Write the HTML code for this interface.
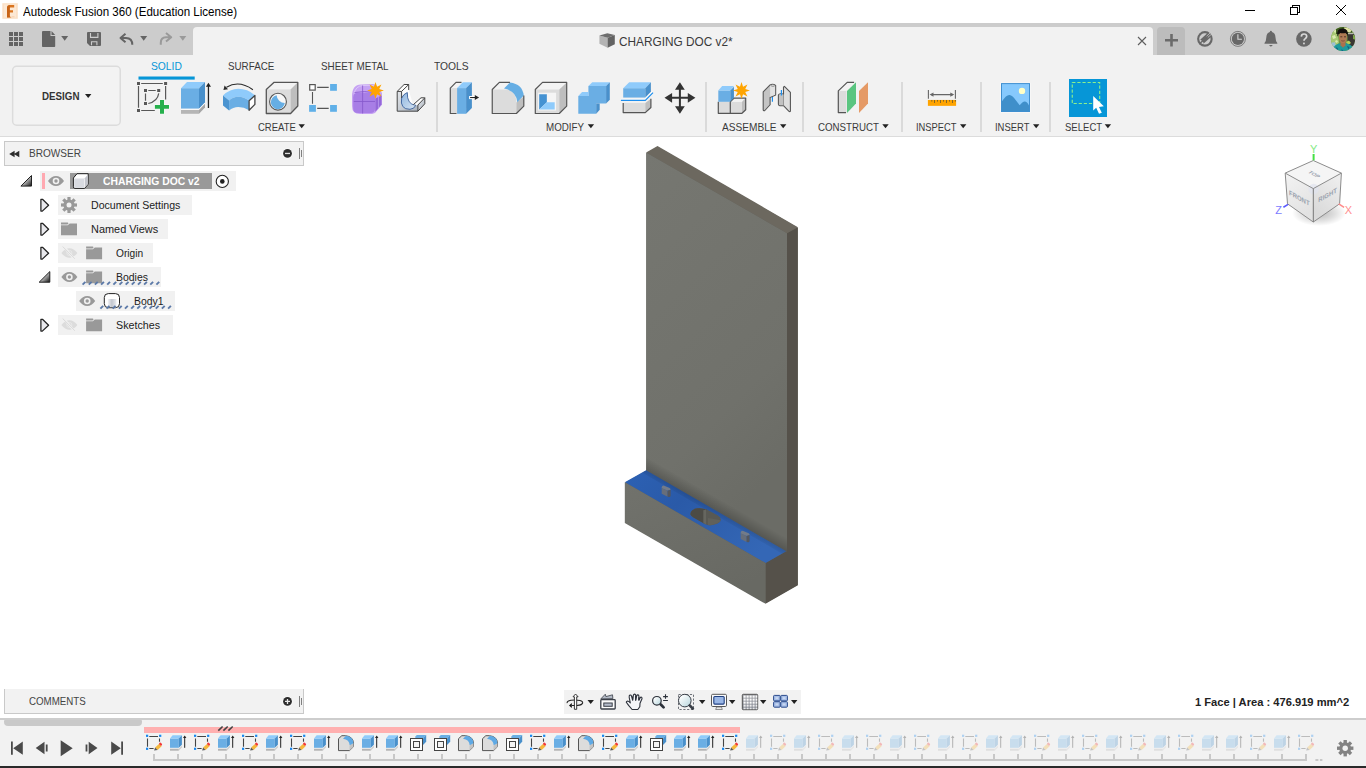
<!DOCTYPE html>
<html lang="en">
<head>
<meta charset="utf-8">
<title>Autodesk Fusion 360 (Education License)</title>
<style>
html,body{margin:0;padding:0;}
body{width:1366px;height:768px;overflow:hidden;position:relative;background:#fff;font-family:"Liberation Sans",sans-serif;color:#333;}
.abs{position:absolute;}
.t{position:absolute;white-space:nowrap;line-height:1;transform-origin:0 0;}
#titlebar{left:0;top:0;width:1366px;height:23px;background:#fff;}
#tabbar{left:0;top:23px;width:1366px;height:32px;background:#cccccc;}
#doctab{left:193px;top:27px;width:960px;height:28px;background:#f2f2f2;border-radius:4px 4px 0 0;}
#newtab{left:1157px;top:27px;width:28px;height:28px;background:#bcbcbc;border-radius:4px 4px 0 0;}
#toolbar{left:0;top:55px;width:1366px;height:81px;background:#f2f2f2;border-bottom:1px solid #dcdcdc;}
#timeline{left:0;top:718px;width:1366px;height:48px;background:#f2f2f2;border-top:2px solid #cdcdcd;box-sizing:border-box;}
#bottombar{left:0;top:766px;width:1366px;height:2px;background:#2a2a2a;}
.panel{background:#f2f2f2;border:1px solid #c9c9c9;box-sizing:border-box;}
.rowbg{position:absolute;background:#f1f1f1;height:20px;}
.sep{position:absolute;top:82px;height:50px;width:2px;background:#dadada;}
#gfx{position:absolute;left:0;top:0;width:1366px;height:768px;}
</style>
</head>
<body>
<div id="titlebar" class="abs"></div>
<div id="tabbar" class="abs"></div>
<div id="doctab" class="abs"></div>
<div id="newtab" class="abs"></div>
<div id="toolbar" class="abs"></div>
<div id="timeline" class="abs"></div>
<div id="bottombar" class="abs"></div>
<div class="abs panel" style="left:4px;top:141px;width:300px;height:25px;"></div>
<div class="abs panel" style="left:4px;top:689px;width:300px;height:25px;border-top:none;"></div>
<div class="abs" style="left:564px;top:690px;width:237px;height:24px;background:#f2f2f2;"></div>
<div class="sep" style="left:436px;"></div>
<div class="sep" style="left:705px;"></div>
<div class="sep" style="left:802px;"></div>
<div class="sep" style="left:901px;"></div>
<div class="sep" style="left:980px;"></div>
<div class="sep" style="left:1049px;"></div>
<div class="abs" style="left:1069px;top:79px;width:38px;height:38px;background:#0696d7;"></div>
<div class="rowbg" style="left:40px;top:171px;width:196px;"></div>
<div class="rowbg" style="left:58px;top:195px;width:134px;"></div>
<div class="rowbg" style="left:58px;top:219px;width:110px;"></div>
<div class="rowbg" style="left:58px;top:243px;width:95px;"></div>
<div class="rowbg" style="left:58px;top:267px;width:103px;"></div>
<div class="rowbg" style="left:76px;top:291px;width:99px;"></div>
<div class="rowbg" style="left:58px;top:315px;width:115px;"></div>
<div class="abs" style="left:70px;top:173px;width:142px;height:16px;background:#999999;"></div>
<div class="abs" style="left:42px;top:173px;width:3px;height:16px;background:#ffa9b1;"></div>
<div class="abs" style="left:4px;top:720px;width:138px;height:6px;background:#c9c9c9;border-radius:1px 1px 4px 4px;"></div>
<div class="abs" style="left:144px;top:727px;width:596px;height:6px;background:#ffb0b0;"></div>
<svg xmlns="http://www.w3.org/2000/svg" id="gfx" viewBox="0 0 1366 768">

<defs>
<linearGradient id="triG" x1="0" y1="0" x2="1" y2="1"><stop offset="0.35" stop-color="#e8e8e8" /><stop offset="1" stop-color="#111" /></linearGradient>
</defs>

<g>
<rect x="2.3" y="3.2" width="15.5" height="15.6" fill="#fbe0c6" />
<rect x="4" y="4.5" width="12" height="13" fill="#fce8d4" />
<path d="M7 7.5Q7 5 9.8 5H14.2V7.4H10.3Q9.8 7.4 9.8 8V10.3H13V12.5H9.8V15.5Q9.8 17 11.2 17V17.4H7z" fill="#d9741f" />
<path d="M7 7.5Q7 5 9.8 5V17.4H7z" fill="#b9560f" opacity=".55" />
<rect x="11.5" y="16.3" width="3" height="1" fill="#f6cfae" />
</g>

<g stroke="#000" stroke-width="1" fill="none" shape-rendering="crispEdges">
<path d="M1245 10.5h10" />
<path d="M1290.5 7.5h7v7h-7z" />
<path d="M1292.5 7.5v-2h7v7h-2" />
</g>
<path d="M1336 5l10 10M1346 5l-10 10" stroke="#000" stroke-width="1" fill="none" />

<g fill="#646464">
<rect x="9" y="32" width="4" height="4" /><rect x="14" y="32" width="4" height="4" /><rect x="19" y="32" width="4" height="4" />
<rect x="9" y="37" width="4" height="4" /><rect x="14" y="37" width="4" height="4" /><rect x="19" y="37" width="4" height="4" />
<rect x="9" y="42" width="4" height="4" /><rect x="14" y="42" width="4" height="4" /><rect x="19" y="42" width="4" height="4" />
<path d="M43 31h7.5v5h4.7v10.2q0 .8-.8.8H42.8q-.8 0-.8-.8V32q0-1 1-1z" />
<path d="M51.5 31l3.7 4h-3.7z" />
<g transform="translate(61.2 36)"><path d="M0 0h7l-3.5 4.8z" /></g>
<path d="M88 32h12q1 0 1 1v12q0 1-1 1H90l-3-3V33q0-1 1-1z" />
<g transform="translate(140.2 36)"><path d="M0 0h7l-3.5 4.8z" /></g>
</g>
<path d="M90.5 33v4.4h7.4V33M91.5 45.2v-3.4h5.4v3.4" stroke="#cccccc" stroke-width="1.1" fill="none" />
<path d="M125.5 33.7l-5 4.2 5 4.3M121.5 37.9h4.5q6.3 .3 6.3 6.8" stroke="#646464" stroke-width="2" fill="none" stroke-linejoin="round" />
<path d="M166 33l5.2 4.3-5.2 4.3M170.5 37.3h-4.5q-5.2 0-5.2 5.5v2" stroke="#9a9a9a" stroke-width="2" fill="none" stroke-linejoin="round" />
<g transform="translate(179.3 36)" fill="#9a9a9a"><path d="M0 0h7l-3.5 4.8z" /></g>

<path d="M599.4 35.5L607.6 37.7V47.8L599.4 43.7z" fill="#b4b4b4" />
<path d="M607.6 37.7L614.8 35V44.3L607.6 47.8z" fill="#636363" />
<path d="M599.4 35.5L607.3 33.2L614.8 35L607.6 37.7z" fill="#6e6e6e" />

<path d="M1138 37l8 8M1146 37l-8 8" stroke="#5e5e5e" stroke-width="1.1" fill="none" />

<path d="M1171.5 34v12.6M1165 40.3h13" stroke="#6b6b6b" stroke-width="2.6" fill="none" />

<circle cx="1204.9" cy="38.9" r="7.8" fill="#686868" />
<clipPath id="jsc"><circle cx="1204.9" cy="38.9" r="5.7" /></clipPath>
<g transform="rotate(-42 1204.9 38.9)">
<g clip-path="url(#jsc)" fill="#cccccc">
<rect x="1198" y="32" width="14" height="4.3" />
<rect x="1198" y="41.5" width="14" height="5" />
<rect x="1198" y="36.3" width="3.3" height="1.9" />
<rect x="1198" y="39.6" width="3.3" height="1.9" />
</g>
<path d="M1208 38h5M1208 39.8h5" stroke="#cccccc" stroke-width=".7" fill="none" />
</g>

<circle cx="1237.9" cy="38.9" r="7.5" fill="none" stroke="#686868" stroke-width=".8" />
<circle cx="1237.9" cy="38.9" r="6.1" fill="#686868" />
<path d="M1237.9 34.2v5.1h4" fill="none" stroke="#d6d6d6" stroke-width="1.1" />

<path d="M1270.9 30.8q1 0 1.1 1.3q3.3 1 3.5 5.4q.1 3.7 1.8 5.4v.9h-12.8v-.9q1.7-1.7 1.8-5.4q.2-4.4 3.5-5.4q.1-1.3 1.1-1.3zM1268.9 45h4l-2 1.8z" fill="#686868" />

<circle cx="1303.9" cy="38.9" r="7.8" fill="#686868" />
<path d="M1301.3 36.6q.1-2.6 2.7-2.6t2.7 2.3q0 1.4-1.4 2.3t-1.3 2.2" fill="none" stroke="#d9d9d9" stroke-width="1.7" />
<rect x="1303.1" y="42.6" width="1.7" height="1.7" fill="#d9d9d9" />

<clipPath id="avc"><circle cx="1343" cy="39" r="12.1" /></clipPath>
<g clip-path="url(#avc)">
<rect x="1330" y="26" width="26" height="26" fill="#6f9442" />
<path d="M1330 26h12v6l-4 3 1 8-5 4-4-2z" fill="#a7c873" />
<path d="M1333 30l3-2 2 3-3 2zM1332 36l3-1 1 3-3 1zM1335 41l2-1 1 2-2 1z" fill="#dcebb0" />
<path d="M1336 27h10l6 4v3h-16z" fill="#3d5a20" />
<path d="M1344 27.5l4-.5 4 3-2 2.5-5-1z" fill="#e3e6a6" />
<rect x="1347.5" y="34" width="8" height="12" fill="#3a3632" />
<rect x="1347.5" y="32.8" width="6" height="1.4" fill="#b9bcae" />
<path d="M1330 42q3 1 5 0l1 5-6 2z" fill="#9cc0d6" />
<path d="M1353 35l3 0v5l-3-1z" fill="#7fa848" />
<path d="M1346 42l3-1.5 2 2.5-3 2z" fill="#b4d05a" />
<path d="M1332 52q.5-6.5 6.5-8.3l3.5-1h3l3.5 1.3q5 1.5 5.5 8z" fill="#1d9a9c" />
<path d="M1336 47l2 1.5-1 2.5zM1347 46l2.5 1-1 2.5zM1341 49.5l2 .5-.5 2z" fill="#125f86" />
<path d="M1340.5 41h5v4.3l-2.5 2.5-2.5-2.5z" fill="#a9714c" />
<path d="M1338.9 36.5q0-4.5 4-4.5t4 4.5q0 6.6-4 6.6t-4-6.6z" fill="#b07a55" />
<path d="M1337.4 36.8q-1.4-8.2 5.2-8.2q6.4 0 5.2 8q-.6-3-2.2-3.6q-3 .6-5.4.1q-1.7.8-2.8 3.7z" fill="#15100e" />
<path d="M1340.3 36.8h2M1344 36.8h2" stroke="#4a2f22" stroke-width=".9" />
<path d="M1341.3 40.7q1.7.8 3.4 0" stroke="#6a3f2e" stroke-width=".7" fill="none" />
</g>
<defs>
</defs>
<rect x="12.65" y="66.25" width="107.6" height="58.9" rx="4" fill="#f3f3f3" stroke="#dcdcdc" stroke-width="1.5" />
<rect x="138.5" y="76.5" width="56.2" height="3.1" fill="#0696d7" />

<g fill="#222">
<g transform="translate(85 94)"><path d="M0 0h6.4l-3.2 4z" /></g>
<g transform="translate(298.5 124.2)"><path d="M0 0h6.4l-3.2 4z" /></g>
<g transform="translate(587.7 124.2)"><path d="M0 0h6.4l-3.2 4z" /></g>
<g transform="translate(780 124.2)"><path d="M0 0h6.4l-3.2 4z" /></g>
<g transform="translate(882.3 124.2)"><path d="M0 0h6.4l-3.2 4z" /></g>
<g transform="translate(960 124.2)"><path d="M0 0h6.4l-3.2 4z" /></g>
<g transform="translate(1033 124.2)"><path d="M0 0h6.4l-3.2 4z" /></g>
<g transform="translate(1104.7 124.2)"><path d="M0 0h6.4l-3.2 4z" /></g>
</g>

<g fill="none" stroke="#585858" stroke-width="1.2">
<path d="M141.2 83.5H162.8M138.5 86V107.8M165.6 86V99.6M141.2 110.5H154.8" />
<path d="M148.3 90.5H155.7M145.5 93.4V100.8M158.75 93.4Q157.5 101.5 148.3 103.5" />
</g>
<g fill="#585858">
<rect x="137" y="82" width="3" height="3" /><rect x="164.1" y="82" width="3" height="3" /><rect x="137" y="109" width="3" height="3" />
<rect x="144" y="89" width="3" height="3" /><rect x="157.2" y="89" width="3" height="3" /><rect x="144" y="102" width="3" height="3" />
</g>
<path d="M159.5 99.6h5v5h5v4.7h-5v5h-5v-5h-5v-4.7h5z" fill="#f4fbf5" />
<path d="M160 100.1h4v4.9h5v3.75h-5v5.1h-4v-5.1h-5.1v-3.75h5.1z" fill="#26b04c" />

<path d="M181 88.15H199V108.75H181z" fill="#6aaee4" />
<path d="M181 88.15L187 82H205L199 88.15z" fill="#8fcbfb" />
<path d="M199 88.15L205 82V102.6L199 108.75z" fill="#4990cb" />
<path d="M181 108.75H199L205 102.6V103.8L199 110H181z" fill="#f8f8f8" />
<path d="M181 110H199V113.8H181z" fill="#b6b6b6" />
<path d="M199 110L205 103.8V107.5L199 113.8z" fill="#a6a6a6" />
<path d="M208.45 86V108" stroke="#222" stroke-width="1.3" fill="none" />
<path d="M208.45 82.8L211 86.8H205.9z" fill="#222" />

<path d="M252.9 89.7Q239 79.8 226.5 87.2" fill="none" stroke="#2a2a2a" stroke-width="1.1" />
<path d="M223.4 90L224.6 85.6L228 89.2z" fill="#2a2a2a" />
<path d="M223 95.5Q230 88.8 238.3 88.8Q247.5 88.8 254.9 95.2L249.1 100.75Q244 96.8 238.3 96.8Q233 96.8 229.1 100.4z" fill="#8fcbfb" />
<path d="M229.1 100.4Q233 96.8 238.3 96.8Q244 96.8 249.1 100.75V110.3Q244 106.9 238.3 106.9Q233 106.9 229.1 110.6z" fill="#6aaee4" />
<path d="M223 95.5L229.1 100.4V110.6L223 105.4z" fill="#4b94d0" />
<path d="M249.1 100.75L254.9 95.5V104.4L249.1 110.3z" fill="#fff" stroke="#444" stroke-width="1.3" stroke-linejoin="round" />

<path d="M266.3 89.4L274.1 82.3H297.8L290.6 89.4z" fill="#f3f3f3" />
<path d="M266.3 89.4H290.6V113.5H266.3z" fill="#dcdcdc" />
<path d="M290.6 89.4L297.8 82.3V106L290.6 113.5z" fill="#bebebe" />
<path d="M266.3 89.4L274.1 82.3H297.8V106L290.6 113.5H266.3z" fill="none" stroke="#555" stroke-width="1.3" stroke-linejoin="round" />
<circle cx="278" cy="101.7" r="8.4" fill="#f7f7f7" stroke="#555" stroke-width="1.1" />
<path d="M276.6 95.3A7 7 0 1 0 284.8 103A8.2 8.2 0 0 1 276.6 95.3z" fill="#66aee4" />

<path d="M317.2 87.4H328.7M312.5 92V103.8M317.2 108.4H328.7" stroke="#555" stroke-width="1.1" fill="none" />
<rect x="309.7" y="84.6" width="5.5" height="5.5" fill="#fff" stroke="#555" stroke-width="1.2" />
<rect x="330.1" y="84" width="6.8" height="6.8" fill="#60b0e8" />
<rect x="309.1" y="105" width="6.8" height="6.8" fill="#60b0e8" />
<rect x="330.1" y="105" width="6.8" height="6.8" fill="#60b0e8" />

<path d="M352 96.4Q352 84.5 361 84.5L372 84Q376 84.3 378 87.5L382 93V104.75L375 113L372 114H360Q352 114 352 106z" fill="#c6a2f3" />
<path d="M375.3 98.5L381.5 95.5V104.5L375.3 111.8z" fill="#9468d8" />
<path d="M378.5 97V108" stroke="#b79bee" stroke-width=".8" fill="none" />
<path d="M353.2 97.5Q353.2 92.8 358 92.8H371Q375 92.8 375 97V108.5Q375 113 370.5 113H358Q353.2 113 353.2 108.5z" fill="#a87ee6" />
<path d="M354 93.5Q356 86 362.6 85.5L371 85.2Q375.5 85.5 377 88.5L375 92.5" fill="none" stroke="#dcc8fa" stroke-width="1" />
<path d="M353.8 101.5H375M362.6 85.5V113.5M354.5 92.5Q364 90.5 375 92.6" stroke="#8558cc" stroke-width=".8" fill="none" />
<g transform="translate(375.5 90.45)"><path d="M0 -8.4L1.55 -3.75L5.95 -5.95L3.75 -1.55L8.4 0L3.75 1.55L5.95 5.95L1.55 3.75L0 8.4L-1.55 3.75L-5.95 5.95L-3.75 1.55L-8.4 0L-3.75 -1.55L-5.95 -5.95L-1.55 -3.75z" fill="#ffa400" /></g>

<defs><linearGradient id="flG" x1="0" y1="0" x2="1" y2="1"><stop offset="0" stop-color="#e4e7eb" /><stop offset="1" stop-color="#aab2bc" /></linearGradient>
<linearGradient id="flB" x1="0" y1="0" x2="1" y2="1"><stop offset="0" stop-color="#8fb6e0" /><stop offset="1" stop-color="#d7e4f2" /></linearGradient></defs>
<path d="M397.2 91.4L404.1 84.5H408.7V90L413 104.5L421 97.8H424.8V103.8L417.9 111.2H397.2z" fill="#fdfdfd" />
<path d="M397.2 91.4H401.6V104Q402 108 406 108.3L417.9 105V111.2H397.2z" fill="url(#flG)" />
<path d="M417.9 105L424.8 97.8V103.8L417.9 111.2z" fill="url(#flG)" />
<path d="M401.6 98Q399.8 109.5 410 109.3Q414.2 109 415.8 105.3Q406.8 104.5 407.3 92.5Q403.5 94 401.6 98z" fill="url(#flB)" stroke="#274f8f" stroke-width=".8" />
<path d="M397.2 91.4L404.1 84.5H408.7V90M413.5 104.5L421 97.8H424.8V103.8L417.9 111.2H397.2V91.4H401.6L408.7 84.5M417.9 105V111.2M417.9 105L424.8 97.8M401.6 91.4V98" fill="none" stroke="#444" stroke-width="1" stroke-linejoin="round" />

<path d="M450.3 88.1L456 82.4H462L457 88.1z" fill="#f3f3f3" />
<path d="M450.3 88.1H457.5V113.5H450.3z" fill="#dcdcdc" />
<path d="M461.5 82.4H456L450.3 88.1V113.5H456.5" fill="none" stroke="#555" stroke-width="1.2" stroke-linejoin="round" />
<path d="M457.1 88.1H466.1V113.8H457.1z" fill="#6aaee4" />
<path d="M457.1 88.1L462.9 82.15H471.9L466.1 88.1z" fill="#8fcbfb" />
<path d="M466.1 88.1L471.9 82.15V108L466.1 113.8z" fill="#4990cb" />
<rect x="469.1" y="96" width="5.5" height="3.1" fill="#fff" />
<path d="M470.1 97.55H476" stroke="#222" stroke-width="1.1" fill="none" />
<path d="M479.1 97.55L474.8 95V100.1z" fill="#222" />

<path d="M492.25 89.5L499.35 82.4H509L505 89.5z" fill="#f3f3f3" />
<path d="M492.25 89.5H507Q516 91 516.4 102.4V113.5H492.25z" fill="#dcdcdc" />
<path d="M516.4 102.4L523.8 96.5V106.1L516.4 113.5z" fill="#bebebe" />
<path d="M504 88.6L509.95 82.4Q522.5 84 523.8 95.5L517.3 102.2Q516.5 91 504 88.6z" fill="#66aee4" />
<path d="M509.95 82.4H499.35L492.25 89.5V113.5H516.4L523.8 106.1V95.5" fill="none" stroke="#555" stroke-width="1.2" stroke-linejoin="round" />

<path d="M535.3 89.5L542.5 82.4H566.7L559.3 89.5z" fill="#f3f3f3" />
<path d="M535.3 89.5H559.3V113.5H535.3z" fill="#dcdcdc" />
<path d="M559.3 89.5L566.7 82.4V106.1L559.3 113.5z" fill="#bebebe" />
<path d="M535.3 89.5L542.5 82.4H566.7V106.1L559.3 113.5H535.3z" fill="none" stroke="#555" stroke-width="1.2" stroke-linejoin="round" />
<rect x="538.1" y="92.75" width="18" height="17.75" fill="#f5f5f5" />
<path d="M539.2 94.15H546.85V102.2L539.2 109.4z" fill="#4592d2" />
<path d="M539.2 109.5L546.85 102.2H554.7V109.5z" fill="#8fcbfb" />

<path d="M588.4 86.1H606.1V103.4H596.2V113.8H578.3V96H588.4z" fill="#6aaee4" />
<path d="M588.4 86.1L592.3 82.15H609.8L606.1 86.1z" fill="#8fcbfb" />
<path d="M578.3 96L582.1 92H588.4V96z" fill="#8fcbfb" />
<path d="M606.1 86.1L609.8 82.15V99.7L606.1 103.4z" fill="#4990cb" />
<path d="M596.2 103.4H599.7V109.8L596.2 113.8z" fill="#4990cb" />

<path d="M623.2 88.15H645.3V97.55H623.2z" fill="#6aaee4" />
<path d="M623.2 88.15L629.2 82.15H650.9L645.3 88.15z" fill="#8fcbfb" />
<path d="M645.3 88.15L650.9 82.15V91.8L645.3 97.55z" fill="#4990cb" />
<path d="M623.2 102.9H645.3V112.6H623.2z" fill="#dcdcdc" />
<path d="M645.3 102.9L650.9 98.75V107.5L645.3 112.6z" fill="#bebebe" />
<path d="M623.2 102.9V112.6H645.3L650.9 107.5V98.75" fill="none" stroke="#555" stroke-width="1.2" stroke-linejoin="round" />
<path d="M620.9 99.3H645L652.5 91.7" fill="none" stroke="#fdfdfd" stroke-width="1.2" />
<path d="M620.9 100.4H645.3L653 92.6" fill="none" stroke="#1e8fee" stroke-width="1.2" />

<g fill="#333">
<path d="M678.9 88h2v19.6h-2zM670 96.8h19.8v2h-19.8z" />
<path d="M679.9 82.15L684.8 89.8H675zM679.9 113.8L684.8 106.2H675zM664.5 97.8L672.1 92.9V102.7zM695.4 97.8L687.8 92.9V102.7z" />
</g>

<path d="M718.3 101.8H742V113.3H718.3z" fill="#dcdcdc" />
<path d="M730.3 101.8L734.1 98.1H745.7L742 101.8z" fill="#f3f3f3" />
<path d="M742 101.8L745.7 98.1V109.8L742 113.3z" fill="#bebebe" />
<path d="M718.3 101.8V113.3H742L745.7 109.8V98.1H734.1L730.3 101.8V113.3" fill="none" stroke="#555" stroke-width="1.2" stroke-linejoin="round" />
<path d="M718.3 90.45H730.3V101.8H718.3z" fill="#6aaee4" />
<path d="M718.3 90.45L722.15 86.1H733.95L730.3 90.45z" fill="#8fcbfb" />
<path d="M730.3 90.45L733.95 86.8V97.8L730.3 101.8z" fill="#4990cb" />
<g transform="translate(741.5 90.45)"><path d="M0 -8.4L1.55 -3.75L5.95 -5.95L3.75 -1.55L8.4 0L3.75 1.55L5.95 5.95L1.55 3.75L0 8.4L-1.55 3.75L-5.95 5.95L-3.75 1.55L-8.4 0L-3.75 -1.55L-5.95 -5.95L-1.55 -3.75z" fill="#ffa400" /></g>

<path d="M763.2 91.85L770.1 84.9Q772.8 83.5 775.65 85.4V95.05L770.1 97.4V104.75L764.6 110.75Q763.2 110.8 763.2 109.8z" fill="#c4c4c4" stroke="#555" stroke-width="1.1" stroke-linejoin="round" />
<path d="M770.1 85.4Q772.8 84 775.1 85.6V94.8L770.1 96.8z" fill="#e2e2e2" />
<ellipse cx="772.9" cy="85.6" rx="1.9" ry=".8" fill="#f4f4f4" stroke="#666" stroke-width=".6" />
<path d="M772.4 96.9V101.8" stroke="#1e8fee" stroke-width="1.2" fill="none" />
<path d="M784.4 86.3L790.4 92.3V111.2Q789.8 112 789 111.3L783.5 105.7H779.8Q778.4 105.5 778.4 104.3V95.05Q779 93.6 780.7 93.7L783.5 94.1V87.2z" fill="#dedede" stroke="#555" stroke-width="1.1" stroke-linejoin="round" />
<path d="M779 95.3Q779.5 94.3 780.7 94.3L783 94.6V105.1H779.9Q779 105 779 104.2z" fill="#c2c2c2" />
<path d="M783.5 94.1V105.7" stroke="#777" stroke-width=".7" fill="none" />
<path d="M781.4 90V95.5" stroke="#1e8fee" stroke-width="1.2" fill="none" />

<path d="M838.3 90.9L847.2 82.4H854.1L846 90.9z" fill="#f3f3f3" />
<path d="M838.3 90.9H846.5V112.6H838.3z" fill="#dcdcdc" />
<path d="M854.1 82.4H847.2L838.3 90.9V112.6H846" fill="none" stroke="#555" stroke-width="1.2" stroke-linejoin="round" />
<path d="M847 90.9L856 82.15V103.4L847 112.9z" fill="#5ac580" />
<path d="M859 90.9L868 82.15V103.4L859 112.9z" fill="#e59a66" />

<rect x="927.9" y="99.95" width="28.2" height="5.9" fill="#ffa400" />
<path d="M934.5 100v3M940.5 100v3M946.5 100v3M952.5 100v3M931.8 100v1.6M937.5 100v1.6M943.5 100v1.6M949.5 100v1.6M955.4 100v1.6" stroke="#77602a" stroke-width=".9" fill="none" />
<path d="M928.4 90V98.75M955.4 90V98.75M931 94.6H953" stroke="#666" stroke-width="1.1" fill="none" />
<path d="M929.6 94.6L933.5 92.5V96.7zM954.2 94.6L950.3 92.5V96.7z" fill="#666" />

<rect x="1000.5" y="82.6" width="30" height="29.9" fill="#fbfbfb" />
<rect x="1001.5" y="83.6" width="28" height="27.9" fill="#86c9fd" stroke="#3f8fd0" stroke-width="1" />
<path d="M1002 101.3Q1006.5 94.5 1009.5 94.9Q1012.5 95 1016 100.5L1019.7 105.3Q1022.5 101.5 1024.7 101.4Q1027 101.3 1029 105.5V111H1002z" fill="#3f8fca" />
<circle cx="1022" cy="90.9" r="3.2" fill="#ffffc6" />

<rect x="1072.25" y="82.45" width="27.45" height="21.05" fill="none" stroke="#8cf08c" stroke-width="1.1" stroke-dasharray="3.2 1.9" />
<path d="M1093.2 96.1V110.6L1096.2 107.8L1099 113.8L1101.8 112.7L1099 106.9L1103.8 106.25z" fill="#fff" />
<defs>
<linearGradient id="bodyG" x1="0" y1="0" x2="1" y2="0"><stop offset="0" stop-color="#f2f3f6" /><stop offset=".45" stop-color="#c3c7cf" /><stop offset="1" stop-color="#e9ebef" /></linearGradient>
</defs>

<path d="M9.2 154L14.6 150.8V157.2zM13.9 154L19.3 150.8V157.2z" fill="#2d2d2d" />
<circle cx="287.5" cy="153.4" r="5.2" fill="#fafafa" />
<circle cx="287.5" cy="153.4" r="4.4" fill="#2d2d2d" />
<rect x="285" y="152.8" width="5" height="1.3" fill="#e0e0e0" />
<path d="M299.5 148V159M301.5 150V157" stroke="#808080" stroke-width="1" fill="none" />

<circle cx="287.5" cy="701.4" r="5.2" fill="#fafafa" />
<circle cx="287.5" cy="701.4" r="4.4" fill="#2d2d2d" />
<path d="M285 701.4h5M287.5 698.9v5" stroke="#e8e8e8" stroke-width="1.3" fill="none" />
<path d="M299.5 696V707M301.5 698V705" stroke="#808080" stroke-width="1" fill="none" />

<g transform="translate(20.3 174.7)"><path d="M.6 11.4L11.2 .8V11.4z" fill="url(#triG)" stroke="#222" stroke-width="1" stroke-linejoin="round" /></g>
<g transform="translate(48 176)"><g><path d="M0 5Q3.5 0 8 0T16 5Q12.5 10 8 10T0 5z" fill="#999999" /><circle cx="8" cy="5" r="3.3" fill="#f1f1f1" /><circle cx="8" cy="5" r="1.7" fill="#999999" /></g></g>
<path d="M73.4 178L77 173.7H88.2V184.2L84.6 188.4H75Q73.4 188.4 73.4 186.8z" fill="#fff" stroke="#222" stroke-width="1" stroke-linejoin="round" />
<path d="M74.2 178.5H84.2V187.8H75Q74.2 187.8 74.2 187z" fill="#d9dbe1" />
<path d="M84.8 178.2L87.7 174.8V184L84.8 187.4z" fill="#c3c5cc" />
<circle cx="222.3" cy="181.4" r="6.1" fill="#fff" stroke="#222" stroke-width="1.1" />
<circle cx="222.3" cy="181.4" r="2.3" fill="#222" />

<g transform="translate(40 198.6)"><path d="M.9 .7H2.5L8.6 6.6L2.3 12.5H.9z" fill="#e9e9ed" stroke="#222" stroke-width="1.25" stroke-linejoin="round" /></g>
<g transform="translate(69 205)" fill="#999999">
<circle r="5.6" />
<g id="teeth"><rect x="-1.6" y="-8" width="3.2" height="16" /><rect x="-8" y="-1.6" width="16" height="3.2" /></g>
<g transform="rotate(45)"><g><rect x="-1.6" y="-8" width="3.2" height="16" /><rect x="-8" y="-1.6" width="16" height="3.2" /></g></g>
<circle r="2.5" fill="#f1f1f1" />
</g>

<g transform="translate(40 222.6)"><path d="M.9 .7H2.5L8.6 6.6L2.3 12.5H.9z" fill="#e9e9ed" stroke="#222" stroke-width="1.25" stroke-linejoin="round" /></g>
<g transform="translate(61 222.6)"><g fill="#999999"><path d="M0 0H6.6Q7.2 0 7.3 .6V1.1L6.4 1.85H0z" /><path d="M0 2.6H6.7L8.7 .9H16V12.6H0z" /></g></g>

<g transform="translate(40 246.6)"><path d="M.9 .7H2.5L8.6 6.6L2.3 12.5H.9z" fill="#e9e9ed" stroke="#222" stroke-width="1.25" stroke-linejoin="round" /></g>
<g transform="translate(61.4 248)"><g><path d="M0 5Q3.5 .3 8 .3T16 5Q12.5 9.7 8 9.7T0 5z" fill="#dcdcdc" /><circle cx="8" cy="5" r="2.6" fill="none" stroke="#e8e8e8" stroke-width="1" /><path d="M2.3 -1.5L12.6 10.6" stroke="#f1f1f1" stroke-width="2.2" /><path d="M1.3 -1.4L13.4 10.7" stroke="#dadada" stroke-width="1" /></g></g>
<g transform="translate(86.1 246.6)"><g fill="#999999"><path d="M0 0H6.6Q7.2 0 7.3 .6V1.1L6.4 1.85H0z" /><path d="M0 2.6H6.7L8.7 .9H16V12.6H0z" /></g></g>

<g transform="translate(38.6 270.8)"><path d="M.6 11.4L11.2 .8V11.4z" fill="url(#triG)" stroke="#222" stroke-width="1" stroke-linejoin="round" /></g>
<g transform="translate(61.4 272)"><g><path d="M0 5Q3.5 0 8 0T16 5Q12.5 10 8 10T0 5z" fill="#999999" /><circle cx="8" cy="5" r="3.3" fill="#f1f1f1" /><circle cx="8" cy="5" r="1.7" fill="#999999" /></g></g>
<g transform="translate(86.1 270.6)"><g fill="#999999"><path d="M0 0H6.6Q7.2 0 7.3 .6V1.1L6.4 1.85H0z" /><path d="M0 2.6H6.7L8.7 .9H16V12.6H0z" /></g></g>

<g transform="translate(79.2 296)"><g><path d="M0 5Q3.5 0 8 0T16 5Q12.5 10 8 10T0 5z" fill="#999999" /><circle cx="8" cy="5" r="3.3" fill="#f1f1f1" /><circle cx="8" cy="5" r="1.7" fill="#999999" /></g></g>
<path d="M104.3 297.5Q104.3 293.6 108.3 293.6H115.5Q119.5 293.6 119.5 297.5V303.7Q119.5 307.7 115.5 307.7H108.3Q104.3 307.7 104.3 303.7z" fill="#fff" stroke="#222" stroke-width="1" />
<path d="M107.9 299H116.4V307.2H107.9z" fill="url(#bodyG)" />

<g transform="translate(40 318.6)"><path d="M.9 .7H2.5L8.6 6.6L2.3 12.5H.9z" fill="#e9e9ed" stroke="#222" stroke-width="1.25" stroke-linejoin="round" /></g>
<g transform="translate(61.4 320)"><g><path d="M0 5Q3.5 .3 8 .3T16 5Q12.5 9.7 8 9.7T0 5z" fill="#dcdcdc" /><circle cx="8" cy="5" r="2.6" fill="none" stroke="#e8e8e8" stroke-width="1" /><path d="M2.3 -1.5L12.6 10.6" stroke="#f1f1f1" stroke-width="2.2" /><path d="M1.3 -1.4L13.4 10.7" stroke="#dadada" stroke-width="1" /></g></g>
<g transform="translate(86.1 318.6)"><g fill="#999999"><path d="M0 0H6.6Q7.2 0 7.3 .6V1.1L6.4 1.85H0z" /><path d="M0 2.6H6.7L8.7 .9H16V12.6H0z" /></g></g>

<g>
<g transform="translate(82.6 281.7)"><path d="M0 3L2.8 .2" stroke="#5b79a8" stroke-width="1.9" fill="none" /></g>
<g transform="translate(88.8 281.7)"><path d="M0 3L2.8 .2" stroke="#5b79a8" stroke-width="1.9" fill="none" /></g>
<g transform="translate(94.9 281.7)"><path d="M0 3L2.8 .2" stroke="#5b79a8" stroke-width="1.9" fill="none" /></g>
<g transform="translate(101.1 281.7)"><path d="M0 3L2.8 .2" stroke="#5b79a8" stroke-width="1.9" fill="none" /></g>
<g transform="translate(107.2 281.7)"><path d="M0 3L2.8 .2" stroke="#5b79a8" stroke-width="1.9" fill="none" /></g>
<g transform="translate(113.4 281.7)"><path d="M0 3L2.8 .2" stroke="#5b79a8" stroke-width="1.9" fill="none" /></g>
<g transform="translate(119.5 281.7)"><path d="M0 3L2.8 .2" stroke="#5b79a8" stroke-width="1.9" fill="none" /></g>
<g transform="translate(125.7 281.7)"><path d="M0 3L2.8 .2" stroke="#5b79a8" stroke-width="1.9" fill="none" /></g>
<g transform="translate(131.8 281.7)"><path d="M0 3L2.8 .2" stroke="#5b79a8" stroke-width="1.9" fill="none" /></g>
<g transform="translate(138 281.7)"><path d="M0 3L2.8 .2" stroke="#5b79a8" stroke-width="1.9" fill="none" /></g>
<g transform="translate(144.1 281.7)"><path d="M0 3L2.8 .2" stroke="#5b79a8" stroke-width="1.9" fill="none" /></g>
<g transform="translate(150.3 281.7)"><path d="M0 3L2.8 .2" stroke="#5b79a8" stroke-width="1.9" fill="none" /></g>
<g transform="translate(156.4 281.7)"><path d="M0 3L2.8 .2" stroke="#5b79a8" stroke-width="1.9" fill="none" /></g>
<g transform="translate(100.4 305.7)"><path d="M0 3L2.8 .2" stroke="#5b79a8" stroke-width="1.9" fill="none" /></g>
<g transform="translate(106.6 305.7)"><path d="M0 3L2.8 .2" stroke="#5b79a8" stroke-width="1.9" fill="none" /></g>
<g transform="translate(112.7 305.7)"><path d="M0 3L2.8 .2" stroke="#5b79a8" stroke-width="1.9" fill="none" /></g>
<g transform="translate(118.9 305.7)"><path d="M0 3L2.8 .2" stroke="#5b79a8" stroke-width="1.9" fill="none" /></g>
<g transform="translate(125 305.7)"><path d="M0 3L2.8 .2" stroke="#5b79a8" stroke-width="1.9" fill="none" /></g>
<g transform="translate(131.2 305.7)"><path d="M0 3L2.8 .2" stroke="#5b79a8" stroke-width="1.9" fill="none" /></g>
<g transform="translate(137.3 305.7)"><path d="M0 3L2.8 .2" stroke="#5b79a8" stroke-width="1.9" fill="none" /></g>
<g transform="translate(143.5 305.7)"><path d="M0 3L2.8 .2" stroke="#5b79a8" stroke-width="1.9" fill="none" /></g>
<g transform="translate(149.6 305.7)"><path d="M0 3L2.8 .2" stroke="#5b79a8" stroke-width="1.9" fill="none" /></g>
<g transform="translate(155.8 305.7)"><path d="M0 3L2.8 .2" stroke="#5b79a8" stroke-width="1.9" fill="none" /></g>
<g transform="translate(161.9 305.7)"><path d="M0 3L2.8 .2" stroke="#5b79a8" stroke-width="1.9" fill="none" /></g>
<g transform="translate(168.1 305.7)"><path d="M0 3L2.8 .2" stroke="#5b79a8" stroke-width="1.9" fill="none" /></g>
</g>
<defs>
<linearGradient id="wallG" x1="0" y1="0" x2="0.35" y2="1"><stop offset="0" stop-color="#767771" /><stop offset=".75" stop-color="#70716b" /><stop offset="1" stop-color="#6b6c66" /></linearGradient>
<linearGradient id="baseG" x1="0" y1="0" x2="0.6" y2="1"><stop offset="0" stop-color="#71726c" /><stop offset="1" stop-color="#686963" /></linearGradient>
<linearGradient id="blueG" x1="0" y1="0" x2="1" y2="0.6"><stop offset="0" stop-color="#2c61b4" /><stop offset=".4" stop-color="#2a5aa8" /><stop offset="1" stop-color="#3467b6" /></linearGradient>
<linearGradient id="aoG" gradientUnits="userSpaceOnUse" x1="716" y1="510.7" x2="722" y2="500.3"><stop offset="0" stop-color="#000" stop-opacity=".2" /><stop offset="1" stop-color="#000" stop-opacity="0" /></linearGradient>
<linearGradient id="aoB" gradientUnits="userSpaceOnUse" x1="716" y1="510.7" x2="712.5" y2="516.8"><stop offset="0" stop-color="#000" stop-opacity=".13" /><stop offset="1" stop-color="#000" stop-opacity="0" /></linearGradient>
</defs>

<path d="M646.6 153L657.5 146.7L797.4 227.5V585L765.5 603.2L625.3 522.6V482.6L646.6 470.5z" fill="#5e5c55" />

<path d="M787 233.3L797.9 227.2V585.3L765.5 603.8V563.1L786.25 551.25z" fill="#55514a" />

<path d="M646.1 152.5L657.5 146.1L797.9 227.2L787 233.3z" fill="#6c685f" />

<path d="M646.1 152.5L787 233.3V552L646.1 471z" fill="url(#wallG)" />
<path d="M646.1 471L787 552V538L646.1 457z" fill="url(#aoG)" />

<path d="M624.8 482.3L646.1 470.2L786.25 551.25L765.6 563.1z" fill="url(#blueG)" />
<path d="M646.1 470.2L786.25 551.25L782 553.7L642 472.6z" fill="url(#aoB)" />

<path d="M624.8 482.3L765.6 563.1V603.8L624.8 522.9z" fill="url(#baseG)" />

<path d="M661.7 487.2Q661.8 485.8 663.6 485.5L669.6 488.1Q670.7 488.7 670.6 489.8L667.6 490.8L661.7 488.2z" fill="#737b88" />
<path d="M661.7 488L667.6 490.7V496.7L661.7 493.7z" fill="#676e7a" />
<path d="M667.6 490.7L670.6 489.7V495.7Q670.4 497.1 669.2 497.1L667.6 496.7z" fill="#54575d" />
<path d="M740.7 532.4Q740.8 531 742.6 530.7L748.6 533.3Q749.7 533.9 749.6 535L746.6 536L740.7 533.4z" fill="#737b88" />
<path d="M740.7 533.2L746.6 535.9V541.9L740.7 538.9z" fill="#676e7a" />
<path d="M746.6 535.9L749.6 534.9V540.9Q749.4 542.3 748.2 542.3L746.6 541.9z" fill="#54575d" />

<path d="M690.4 514.3Q690.6 509 697.9 508.25Q702.5 507.8 707.2 509.8L717.5 515.3Q721 517.3 720.8 519.7Q720.3 522.5 715.8 523.9L712 525Q708.65 525.7 705.5 524.2L693.5 517.5Q690.6 515.9 690.4 514.3z" fill="#595953" />
<path d="M690.4 514.3Q690.6 509 697.9 508.25Q702.5 507.8 707.2 509.8L704.5 510.5V523.7L693.5 517.5Q690.6 515.9 690.4 514.3z" fill="#4c4b45" />
<path d="M703.3 510.3L706 509.6V524.4L703.3 523z" fill="#66665f" />
<path d="M708 518Q714 519 720.7 520.2Q720 522.6 715.8 523.9L712 525Q709.5 525.5 708 525z" fill="#61615a" />
<defs>
<radialGradient id="shG" cx=".5" cy=".5" r=".5"><stop offset="0" stop-color="#000" stop-opacity=".28" /><stop offset=".6" stop-color="#000" stop-opacity=".12" /><stop offset="1" stop-color="#000" stop-opacity="0" /></radialGradient>
<linearGradient id="vcL" x1="0" y1="0" x2=".4" y2="1"><stop offset="0" stop-color="#f3f3f3" /><stop offset="1" stop-color="#e2e2e2" /></linearGradient>
<linearGradient id="vcR" x1="1" y1="0" x2=".5" y2="1"><stop offset="0" stop-color="#f0f0f0" /><stop offset="1" stop-color="#dadada" /></linearGradient>
</defs>
<ellipse cx="1319" cy="213" rx="27" ry="13" fill="url(#shG)" />
<path d="M1313.3 160.5L1341.4 173.1L1313.3 188.6L1285.2 173.1z" fill="#f5f5f5" />
<path d="M1285.2 173.1L1313.3 188.6V222L1287.5 203.8z" fill="url(#vcL)" />
<path d="M1313.3 188.6L1341.4 173.1L1339.6 203.8L1313.3 222z" fill="url(#vcR)" />
<circle cx="1313.6" cy="189" r="5.2" fill="#dfe3ee" opacity=".7" />
<g fill="none" stroke="#8c8c8c" stroke-width="1" stroke-linejoin="round">
<path d="M1313.3 160.5L1341.4 173.1L1313.3 188.6L1285.2 173.1z" />
<path d="M1285.2 173.1L1287.5 203.8L1313.3 222L1339.6 203.8L1341.4 173.1" />
<path d="M1313.3 188.6V222" stroke="#777" />
</g>
<path d="M1313.6 154V160.3" stroke="#44e044" stroke-width="2" fill="none" />
<path d="M1283.4 207.3L1288.1 204.4" stroke="#5a5aff" stroke-width="1.6" fill="none" />
<path d="M1338.7 203.8L1344.1 207.3" stroke="#ff8a8a" stroke-width="1.6" fill="none" />
<g font-family="Liberation Sans, sans-serif" text-anchor="middle">
<text x="1313.6" y="153.3" font-size="11" fill="#86ea86">Y</text>
<text x="1278.5" y="213.7" font-size="11" fill="#7b7bff">Z</text>
<text x="1348.5" y="213.7" font-size="11" fill="#ff8f8f">X</text>
<text transform="matrix(.875 .483 0 1 1299.3 200.4)" font-size="6.8" fill="#99a1ad" font-weight="bold">FRONT</text>
<text transform="matrix(.875 -.483 0 1 1327.6 197.4)" font-size="6.8" fill="#99a1ad" font-weight="bold">RIGHT</text>
<text transform="matrix(.700 .386 -.700 .386 1312.6 175.2)" font-size="7" fill="#99a1ad" font-weight="bold">TOP</text>
</g>
<defs>
<linearGradient id="lensG" x1="0" y1="0" x2="1" y2="1"><stop offset="0.15" stop-color="#ffffff" /><stop offset="1" stop-color="#b5d5dc" /></linearGradient>
<linearGradient id="gridG" x1="0" y1="0" x2="0" y2="1"><stop offset="0" stop-color="#9a9ca2" /><stop offset="1" stop-color="#6f7480" /></linearGradient>
</defs>
<g fill="#222">
<g transform="translate(587.5 700)"><path d="M0 0h6.4l-3.2 4z" /></g>
<g transform="translate(699 700)"><path d="M0 0h6.4l-3.2 4z" /></g>
<g transform="translate(729 700)"><path d="M0 0h6.4l-3.2 4z" /></g>
<g transform="translate(760 700)"><path d="M0 0h6.4l-3.2 4z" /></g>
<g transform="translate(791 700)"><path d="M0 0h6.4l-3.2 4z" /></g>
</g>

<path d="M567.2 703.2Q566.5 701 571 700.3Q575.5 699.7 580 700.5Q583 701.3 582.6 703Q582 705 577.5 705.4L572 705.5" fill="none" stroke="#222" stroke-width="1.1" />
<path d="M569 705.5L571.8 703.1V707.9z" fill="#111" />
<path d="M574.4 709.3V696.8H573L575.55 694L578.1 696.8H576.7V709.3z" fill="#fff" stroke="#222" stroke-width=".9" stroke-linejoin="round" />

<path d="M600.9 698.8L605.3 694.2L605.9 696.6L612.5 694.8L612.9 698.6z" fill="#b3bac6" stroke="#3a3f48" stroke-width=".8" stroke-linejoin="round" />
<rect x="600.8" y="699.6" width="14.4" height="9.4" rx=".8" fill="#fcfcfc" stroke="#3a3f48" stroke-width="1.3" />
<rect x="603.8" y="703" width="8.4" height="3.3" fill="#b4bccb" stroke="#3a3f48" stroke-width="1" />

<path d="M626.3 702.2Q626.5 701 627.7 701Q629 701.3 630.3 702.8L629.2 697.5Q628.9 695.4 629.9 695.1Q631 694.8 631.5 696L632.6 700L633.4 695.2Q633.6 694.1 634.6 694.1Q635.6 694.1 635.7 695.2V700.2L636.7 695.8Q637 694.8 637.9 694.9Q638.9 695 638.9 696.2V700.2L640.2 697.7Q640.8 696.9 641.5 697.3Q642.3 697.8 642 698.8L640 703.2L639.8 706.7L637.8 709.5H632.1L628.6 705.4z" fill="#f4f5f8" stroke="#2c313a" stroke-width="1.1" stroke-linejoin="round" />
<path d="M632.7 696.5V700.5M635.7 696V700.5M638.8 697.2V700.3" stroke="#2c313a" stroke-width="1.1" fill="none" />

<circle cx="656.9" cy="700.8" r="4.3" fill="url(#lensG)" stroke="#2c313a" stroke-width="1.2" />
<path d="M660.8 704.5L663.6 707.4" stroke="#2c313a" stroke-width="2.7" stroke-linecap="round" fill="none" />
<path d="M663.1 696.6H667.9M665.5 694.2V698.8M663.1 700.45H667.9" stroke="#2c313a" stroke-width="1.1" fill="none" />

<path d="M678.5 694.5H693.5V709.5H678.5z" fill="none" stroke="#4a4f58" stroke-width=".8" stroke-dasharray="2.2 1.6" />
<circle cx="684.8" cy="700.6" r="6.3" fill="url(#lensG)" stroke="#3a3f48" stroke-width="1" />
<path d="M689.7 705.4L692.8 708.6" stroke="#3a3f48" stroke-width="2.8" stroke-linecap="round" fill="none" />

<rect x="711.5" y="694.3" width="15" height="12.2" rx="1.2" fill="#fafafa" stroke="#555" stroke-width="1" />
<rect x="713.8" y="696.5" width="10.4" height="7.6" rx="1" fill="#9ab7e6" stroke="#1f3f80" stroke-width="1.1" />
<path d="M716.5 707h5l.8 2.5h-6.6z" fill="#e8e8e8" stroke="#666" stroke-width=".7" />

<rect x="742.3" y="694.3" width="15.4" height="15.4" rx="1" fill="url(#gridG)" stroke="#555" stroke-width="1" />
<g fill="#fafafa">
<path d="M743.5 695.5h2.2v2.2h-2.2zM746.5 695.5h2.2v2.2h-2.2zM749.5 695.5h2.2v2.2h-2.2zM752.5 695.5h2.2v2.2h-2.2zM755.5 695.5h1.8v2.2h-1.8z" opacity="1" />
<path d="M743.5 698.5h2.2v2.2h-2.2zM746.5 698.5h2.2v2.2h-2.2zM749.5 698.5h2.2v2.2h-2.2zM752.5 698.5h2.2v2.2h-2.2zM755.5 698.5h1.8v2.2h-1.8z" opacity="1" />
<path d="M743.5 701.5h2.2v2.2h-2.2zM746.5 701.5h2.2v2.2h-2.2zM749.5 701.5h2.2v2.2h-2.2zM752.5 701.5h2.2v2.2h-2.2zM755.5 701.5h1.8v2.2h-1.8z" opacity="1" />
<path d="M743.5 704.5h2.2v2.2h-2.2zM746.5 704.5h2.2v2.2h-2.2zM749.5 704.5h2.2v2.2h-2.2zM752.5 704.5h2.2v2.2h-2.2zM755.5 704.5h1.8v2.2h-1.8z" opacity="0.9" />
<path d="M743.5 707.5h2.2v1.7h-2.2zM746.5 707.5h2.2v1.7h-2.2zM749.5 707.5h2.2v1.7h-2.2zM752.5 707.5h2.2v1.7h-2.2zM755.5 707.5h1.8v1.7h-1.8z" opacity="0.85" />
</g>

<g fill="#a9c0e8" stroke="#2a4a8c" stroke-width="1">
<rect x="773.6" y="695.4" width="6.6" height="5.5" rx=".8" />
<rect x="780.8" y="695.4" width="6.6" height="5.5" rx=".8" />
<rect x="773.6" y="701.7" width="6.6" height="5.5" rx=".8" />
<rect x="780.8" y="701.7" width="6.6" height="5.5" rx=".8" />
</g>
<g fill="#c9d8f2"><rect x="775.6" y="697.2" width="2.6" height="1.8" /><rect x="782.8" y="697.2" width="2.6" height="1.8" /><rect x="775.6" y="703.5" width="2.6" height="1.8" /><rect x="782.8" y="703.5" width="2.6" height="1.8" /></g>
<defs>
</defs>
<g>
<g transform="translate(146 735.2)"><g>
<path d="M3.3 1.3H12M1.5 3.3V11.6M13.5 3.3V6.5M3.3 13.3H7.6" stroke="#444" stroke-width="1.1" fill="none" />
<rect x="0" y="-.5" width="2.2" height="2.2" fill="#1787f0" /><rect x="13.1" y="-.5" width="2.2" height="2.2" fill="#1787f0" /><rect x="0" y="12.5" width="2.2" height="2.2" fill="#1787f0" />
<path d="M13.3 8.5L15.6 11L11.6 14.7L9.1 12.3z" fill="#f6b83c" />
<path d="M9.1 12.3L11.6 14.7L8.1 15.3z" fill="#5a5a5a" />
<ellipse cx="14.6" cy="8.9" rx="1.7" ry="1.2" transform="rotate(42 14.6 8.9)" fill="#f23a3a" />
</g></g>
<g transform="translate(170 735.2)"><g>
<path d="M0 3.3H8.8V12.6H0z" fill="#6aaee4" />
<path d="M0 3.3L2.6 0H11.9L8.8 3.3z" fill="#8fcbfb" />
<path d="M8.8 3.3L11.9 0V9.5L8.8 12.6z" fill="#4990cb" />
<path d="M0 13.6H8.8V15.5H0z" fill="#b4b4b4" />
<path d="M8.8 13.6L11.9 10.4V12.3L8.8 15.5z" fill="#cfcfcf" />
<path d="M14.7 1.5V12.6" stroke="#222" stroke-width="1" fill="none" />
<path d="M14.7 .2L16.4 2.7H13z" fill="#222" />
</g></g>
<g transform="translate(194 735.2)"><g>
<path d="M3.3 1.3H12M1.5 3.3V11.6M13.5 3.3V6.5M3.3 13.3H7.6" stroke="#444" stroke-width="1.1" fill="none" />
<rect x="0" y="-.5" width="2.2" height="2.2" fill="#1787f0" /><rect x="13.1" y="-.5" width="2.2" height="2.2" fill="#1787f0" /><rect x="0" y="12.5" width="2.2" height="2.2" fill="#1787f0" />
<path d="M13.3 8.5L15.6 11L11.6 14.7L9.1 12.3z" fill="#f6b83c" />
<path d="M9.1 12.3L11.6 14.7L8.1 15.3z" fill="#5a5a5a" />
<ellipse cx="14.6" cy="8.9" rx="1.7" ry="1.2" transform="rotate(42 14.6 8.9)" fill="#f23a3a" />
</g></g>
<g transform="translate(218 735.2)"><g>
<path d="M0 3.3H8.8V12.6H0z" fill="#6aaee4" />
<path d="M0 3.3L2.6 0H11.9L8.8 3.3z" fill="#8fcbfb" />
<path d="M8.8 3.3L11.9 0V9.5L8.8 12.6z" fill="#4990cb" />
<path d="M0 13.6H8.8V15.5H0z" fill="#b4b4b4" />
<path d="M8.8 13.6L11.9 10.4V12.3L8.8 15.5z" fill="#cfcfcf" />
<path d="M14.7 1.5V12.6" stroke="#222" stroke-width="1" fill="none" />
<path d="M14.7 .2L16.4 2.7H13z" fill="#222" />
</g></g>
<g transform="translate(242 735.2)"><g>
<path d="M3.3 1.3H12M1.5 3.3V11.6M13.5 3.3V6.5M3.3 13.3H7.6" stroke="#444" stroke-width="1.1" fill="none" />
<rect x="0" y="-.5" width="2.2" height="2.2" fill="#1787f0" /><rect x="13.1" y="-.5" width="2.2" height="2.2" fill="#1787f0" /><rect x="0" y="12.5" width="2.2" height="2.2" fill="#1787f0" />
<path d="M13.3 8.5L15.6 11L11.6 14.7L9.1 12.3z" fill="#f6b83c" />
<path d="M9.1 12.3L11.6 14.7L8.1 15.3z" fill="#5a5a5a" />
<ellipse cx="14.6" cy="8.9" rx="1.7" ry="1.2" transform="rotate(42 14.6 8.9)" fill="#f23a3a" />
</g></g>
<g transform="translate(266 735.2)"><g>
<path d="M0 3.3H8.8V12.6H0z" fill="#6aaee4" />
<path d="M0 3.3L2.6 0H11.9L8.8 3.3z" fill="#8fcbfb" />
<path d="M8.8 3.3L11.9 0V9.5L8.8 12.6z" fill="#4990cb" />
<path d="M0 13.6H8.8V15.5H0z" fill="#b4b4b4" />
<path d="M8.8 13.6L11.9 10.4V12.3L8.8 15.5z" fill="#cfcfcf" />
<path d="M14.7 1.5V12.6" stroke="#222" stroke-width="1" fill="none" />
<path d="M14.7 .2L16.4 2.7H13z" fill="#222" />
</g></g>
<g transform="translate(290 735.2)"><g>
<path d="M3.3 1.3H12M1.5 3.3V11.6M13.5 3.3V6.5M3.3 13.3H7.6" stroke="#444" stroke-width="1.1" fill="none" />
<rect x="0" y="-.5" width="2.2" height="2.2" fill="#1787f0" /><rect x="13.1" y="-.5" width="2.2" height="2.2" fill="#1787f0" /><rect x="0" y="12.5" width="2.2" height="2.2" fill="#1787f0" />
<path d="M13.3 8.5L15.6 11L11.6 14.7L9.1 12.3z" fill="#f6b83c" />
<path d="M9.1 12.3L11.6 14.7L8.1 15.3z" fill="#5a5a5a" />
<ellipse cx="14.6" cy="8.9" rx="1.7" ry="1.2" transform="rotate(42 14.6 8.9)" fill="#f23a3a" />
</g></g>
<g transform="translate(314 735.2)"><g>
<path d="M0 3.3H8.8V12.6H0z" fill="#6aaee4" />
<path d="M0 3.3L2.6 0H11.9L8.8 3.3z" fill="#8fcbfb" />
<path d="M8.8 3.3L11.9 0V9.5L8.8 12.6z" fill="#4990cb" />
<path d="M0 13.6H8.8V15.5H0z" fill="#b4b4b4" />
<path d="M8.8 13.6L11.9 10.4V12.3L8.8 15.5z" fill="#cfcfcf" />
<path d="M14.7 1.5V12.6" stroke="#222" stroke-width="1" fill="none" />
<path d="M14.7 .2L16.4 2.7H13z" fill="#222" />
</g></g>
<g transform="translate(338 735.2)"><g>
<path d="M.5 15.4V3.5L3.8 .5H7.5Q15.2 1.3 15.5 8V11.5L11.5 15.4z" fill="#dcdcdc" stroke="#555" stroke-width="1" stroke-linejoin="round" />
<path d="M11.5 15.4V11Q11.5 10 12.3 9.5L15.5 8V11.5z" fill="#c4c4c4" />
<path d="M5 3.6L8 .6Q15.2 1.3 15.5 8L11.7 10Q11.4 4.6 5 3.6z" fill="#5fa9e4" />
</g></g>
<g transform="translate(362 735.2)"><g>
<path d="M0 3.3H8.8V12.6H0z" fill="#6aaee4" />
<path d="M0 3.3L2.6 0H11.9L8.8 3.3z" fill="#8fcbfb" />
<path d="M8.8 3.3L11.9 0V9.5L8.8 12.6z" fill="#4990cb" />
<path d="M0 13.6H8.8V15.5H0z" fill="#b4b4b4" />
<path d="M8.8 13.6L11.9 10.4V12.3L8.8 15.5z" fill="#cfcfcf" />
<path d="M14.7 1.5V12.6" stroke="#222" stroke-width="1" fill="none" />
<path d="M14.7 .2L16.4 2.7H13z" fill="#222" />
</g></g>
<g transform="translate(386 735.2)"><g>
<path d="M0 3.3H8.8V12.6H0z" fill="#6aaee4" />
<path d="M0 3.3L2.6 0H11.9L8.8 3.3z" fill="#8fcbfb" />
<path d="M8.8 3.3L11.9 0V9.5L8.8 12.6z" fill="#4990cb" />
<path d="M0 13.6H8.8V15.5H0z" fill="#b4b4b4" />
<path d="M8.8 13.6L11.9 10.4V12.3L8.8 15.5z" fill="#cfcfcf" />
<path d="M14.7 1.5V12.6" stroke="#222" stroke-width="1" fill="none" />
<path d="M14.7 .2L16.4 2.7H13z" fill="#222" />
</g></g>
<g transform="translate(410 735.2)"><g>
<path d="M5.3 1.4L6.8 -.1H16.2L13 3.3H5.3z" fill="#6aaee4" />
<path d="M13 3.3L16.2 -.1V6.5L13 9.8z" fill="#4990cb" />
<rect x=".5" y="3.3" width="12" height="12" fill="#fff" stroke="#444" stroke-width="1" />
<rect x="3.5" y="6.3" width="6" height="6" fill="#f4f4f4" stroke="#444" stroke-width="1" />
</g></g>
<g transform="translate(434 735.2)"><g>
<path d="M5.3 1.4L6.8 -.1H16.2L13 3.3H5.3z" fill="#6aaee4" />
<path d="M13 3.3L16.2 -.1V6.5L13 9.8z" fill="#4990cb" />
<rect x=".5" y="3.3" width="12" height="12" fill="#fff" stroke="#444" stroke-width="1" />
<rect x="3.5" y="6.3" width="6" height="6" fill="#f4f4f4" stroke="#444" stroke-width="1" />
</g></g>
<g transform="translate(458 735.2)"><g>
<path d="M.5 15.4V3.5L3.8 .5H7.5Q15.2 1.3 15.5 8V11.5L11.5 15.4z" fill="#dcdcdc" stroke="#555" stroke-width="1" stroke-linejoin="round" />
<path d="M11.5 15.4V11Q11.5 10 12.3 9.5L15.5 8V11.5z" fill="#c4c4c4" />
<path d="M5 3.6L8 .6Q15.2 1.3 15.5 8L11.7 10Q11.4 4.6 5 3.6z" fill="#5fa9e4" />
</g></g>
<g transform="translate(482 735.2)"><g>
<path d="M.5 15.4V3.5L3.8 .5H7.5Q15.2 1.3 15.5 8V11.5L11.5 15.4z" fill="#dcdcdc" stroke="#555" stroke-width="1" stroke-linejoin="round" />
<path d="M11.5 15.4V11Q11.5 10 12.3 9.5L15.5 8V11.5z" fill="#c4c4c4" />
<path d="M5 3.6L8 .6Q15.2 1.3 15.5 8L11.7 10Q11.4 4.6 5 3.6z" fill="#5fa9e4" />
</g></g>
<g transform="translate(506 735.2)"><g>
<path d="M5.3 1.4L6.8 -.1H16.2L13 3.3H5.3z" fill="#6aaee4" />
<path d="M13 3.3L16.2 -.1V6.5L13 9.8z" fill="#4990cb" />
<rect x=".5" y="3.3" width="12" height="12" fill="#fff" stroke="#444" stroke-width="1" />
<rect x="3.5" y="6.3" width="6" height="6" fill="#f4f4f4" stroke="#444" stroke-width="1" />
</g></g>
<g transform="translate(530 735.2)"><g>
<path d="M3.3 1.3H12M1.5 3.3V11.6M13.5 3.3V6.5M3.3 13.3H7.6" stroke="#444" stroke-width="1.1" fill="none" />
<rect x="0" y="-.5" width="2.2" height="2.2" fill="#1787f0" /><rect x="13.1" y="-.5" width="2.2" height="2.2" fill="#1787f0" /><rect x="0" y="12.5" width="2.2" height="2.2" fill="#1787f0" />
<path d="M13.3 8.5L15.6 11L11.6 14.7L9.1 12.3z" fill="#f6b83c" />
<path d="M9.1 12.3L11.6 14.7L8.1 15.3z" fill="#5a5a5a" />
<ellipse cx="14.6" cy="8.9" rx="1.7" ry="1.2" transform="rotate(42 14.6 8.9)" fill="#f23a3a" />
</g></g>
<g transform="translate(554 735.2)"><g>
<path d="M0 3.3H8.8V12.6H0z" fill="#6aaee4" />
<path d="M0 3.3L2.6 0H11.9L8.8 3.3z" fill="#8fcbfb" />
<path d="M8.8 3.3L11.9 0V9.5L8.8 12.6z" fill="#4990cb" />
<path d="M0 13.6H8.8V15.5H0z" fill="#b4b4b4" />
<path d="M8.8 13.6L11.9 10.4V12.3L8.8 15.5z" fill="#cfcfcf" />
<path d="M14.7 1.5V12.6" stroke="#222" stroke-width="1" fill="none" />
<path d="M14.7 .2L16.4 2.7H13z" fill="#222" />
</g></g>
<g transform="translate(578 735.2)"><g>
<path d="M.5 15.4V3.5L3.8 .5H7.5Q15.2 1.3 15.5 8V11.5L11.5 15.4z" fill="#dcdcdc" stroke="#555" stroke-width="1" stroke-linejoin="round" />
<path d="M11.5 15.4V11Q11.5 10 12.3 9.5L15.5 8V11.5z" fill="#c4c4c4" />
<path d="M5 3.6L8 .6Q15.2 1.3 15.5 8L11.7 10Q11.4 4.6 5 3.6z" fill="#5fa9e4" />
</g></g>
<g transform="translate(602 735.2)"><g>
<path d="M3.3 1.3H12M1.5 3.3V11.6M13.5 3.3V6.5M3.3 13.3H7.6" stroke="#444" stroke-width="1.1" fill="none" />
<rect x="0" y="-.5" width="2.2" height="2.2" fill="#1787f0" /><rect x="13.1" y="-.5" width="2.2" height="2.2" fill="#1787f0" /><rect x="0" y="12.5" width="2.2" height="2.2" fill="#1787f0" />
<path d="M13.3 8.5L15.6 11L11.6 14.7L9.1 12.3z" fill="#f6b83c" />
<path d="M9.1 12.3L11.6 14.7L8.1 15.3z" fill="#5a5a5a" />
<ellipse cx="14.6" cy="8.9" rx="1.7" ry="1.2" transform="rotate(42 14.6 8.9)" fill="#f23a3a" />
</g></g>
<g transform="translate(626 735.2)"><g>
<path d="M0 3.3H8.8V12.6H0z" fill="#6aaee4" />
<path d="M0 3.3L2.6 0H11.9L8.8 3.3z" fill="#8fcbfb" />
<path d="M8.8 3.3L11.9 0V9.5L8.8 12.6z" fill="#4990cb" />
<path d="M0 13.6H8.8V15.5H0z" fill="#b4b4b4" />
<path d="M8.8 13.6L11.9 10.4V12.3L8.8 15.5z" fill="#cfcfcf" />
<path d="M14.7 1.5V12.6" stroke="#222" stroke-width="1" fill="none" />
<path d="M14.7 .2L16.4 2.7H13z" fill="#222" />
</g></g>
<g transform="translate(650 735.2)"><g>
<path d="M5.3 1.4L6.8 -.1H16.2L13 3.3H5.3z" fill="#6aaee4" />
<path d="M13 3.3L16.2 -.1V6.5L13 9.8z" fill="#4990cb" />
<rect x=".5" y="3.3" width="12" height="12" fill="#fff" stroke="#444" stroke-width="1" />
<rect x="3.5" y="6.3" width="6" height="6" fill="#f4f4f4" stroke="#444" stroke-width="1" />
</g></g>
<g transform="translate(674 735.2)"><g>
<path d="M0 3.3H8.8V12.6H0z" fill="#6aaee4" />
<path d="M0 3.3L2.6 0H11.9L8.8 3.3z" fill="#8fcbfb" />
<path d="M8.8 3.3L11.9 0V9.5L8.8 12.6z" fill="#4990cb" />
<path d="M0 13.6H8.8V15.5H0z" fill="#b4b4b4" />
<path d="M8.8 13.6L11.9 10.4V12.3L8.8 15.5z" fill="#cfcfcf" />
<path d="M14.7 1.5V12.6" stroke="#222" stroke-width="1" fill="none" />
<path d="M14.7 .2L16.4 2.7H13z" fill="#222" />
</g></g>
<g transform="translate(698 735.2)"><g>
<path d="M0 3.3H8.8V12.6H0z" fill="#6aaee4" />
<path d="M0 3.3L2.6 0H11.9L8.8 3.3z" fill="#8fcbfb" />
<path d="M8.8 3.3L11.9 0V9.5L8.8 12.6z" fill="#4990cb" />
<path d="M0 13.6H8.8V15.5H0z" fill="#b4b4b4" />
<path d="M8.8 13.6L11.9 10.4V12.3L8.8 15.5z" fill="#cfcfcf" />
<path d="M14.7 1.5V12.6" stroke="#222" stroke-width="1" fill="none" />
<path d="M14.7 .2L16.4 2.7H13z" fill="#222" />
</g></g>
<g transform="translate(722 735.2)"><g>
<path d="M3.3 1.3H12M1.5 3.3V11.6M13.5 3.3V6.5M3.3 13.3H7.6" stroke="#444" stroke-width="1.1" fill="none" />
<rect x="0" y="-.5" width="2.2" height="2.2" fill="#1787f0" /><rect x="13.1" y="-.5" width="2.2" height="2.2" fill="#1787f0" /><rect x="0" y="12.5" width="2.2" height="2.2" fill="#1787f0" />
<path d="M13.3 8.5L15.6 11L11.6 14.7L9.1 12.3z" fill="#f6b83c" />
<path d="M9.1 12.3L11.6 14.7L8.1 15.3z" fill="#5a5a5a" />
<ellipse cx="14.6" cy="8.9" rx="1.7" ry="1.2" transform="rotate(42 14.6 8.9)" fill="#f23a3a" />
</g></g>
</g>
<g opacity=".3">
<g transform="translate(746 735.2)"><g>
<path d="M0 3.3H8.8V12.6H0z" fill="#6aaee4" />
<path d="M0 3.3L2.6 0H11.9L8.8 3.3z" fill="#8fcbfb" />
<path d="M8.8 3.3L11.9 0V9.5L8.8 12.6z" fill="#4990cb" />
<path d="M0 13.6H8.8V15.5H0z" fill="#b4b4b4" />
<path d="M8.8 13.6L11.9 10.4V12.3L8.8 15.5z" fill="#cfcfcf" />
<path d="M14.7 1.5V12.6" stroke="#222" stroke-width="1" fill="none" />
<path d="M14.7 .2L16.4 2.7H13z" fill="#222" />
</g></g>
<g transform="translate(770 735.2)"><g>
<path d="M3.3 1.3H12M1.5 3.3V11.6M13.5 3.3V6.5M3.3 13.3H7.6" stroke="#444" stroke-width="1.1" fill="none" />
<rect x="0" y="-.5" width="2.2" height="2.2" fill="#1787f0" /><rect x="13.1" y="-.5" width="2.2" height="2.2" fill="#1787f0" /><rect x="0" y="12.5" width="2.2" height="2.2" fill="#1787f0" />
<path d="M13.3 8.5L15.6 11L11.6 14.7L9.1 12.3z" fill="#f6b83c" />
<path d="M9.1 12.3L11.6 14.7L8.1 15.3z" fill="#5a5a5a" />
<ellipse cx="14.6" cy="8.9" rx="1.7" ry="1.2" transform="rotate(42 14.6 8.9)" fill="#f23a3a" />
</g></g>
<g transform="translate(794 735.2)"><g>
<path d="M0 3.3H8.8V12.6H0z" fill="#6aaee4" />
<path d="M0 3.3L2.6 0H11.9L8.8 3.3z" fill="#8fcbfb" />
<path d="M8.8 3.3L11.9 0V9.5L8.8 12.6z" fill="#4990cb" />
<path d="M0 13.6H8.8V15.5H0z" fill="#b4b4b4" />
<path d="M8.8 13.6L11.9 10.4V12.3L8.8 15.5z" fill="#cfcfcf" />
<path d="M14.7 1.5V12.6" stroke="#222" stroke-width="1" fill="none" />
<path d="M14.7 .2L16.4 2.7H13z" fill="#222" />
</g></g>
<g transform="translate(818 735.2)"><g>
<path d="M3.3 1.3H12M1.5 3.3V11.6M13.5 3.3V6.5M3.3 13.3H7.6" stroke="#444" stroke-width="1.1" fill="none" />
<rect x="0" y="-.5" width="2.2" height="2.2" fill="#1787f0" /><rect x="13.1" y="-.5" width="2.2" height="2.2" fill="#1787f0" /><rect x="0" y="12.5" width="2.2" height="2.2" fill="#1787f0" />
<path d="M13.3 8.5L15.6 11L11.6 14.7L9.1 12.3z" fill="#f6b83c" />
<path d="M9.1 12.3L11.6 14.7L8.1 15.3z" fill="#5a5a5a" />
<ellipse cx="14.6" cy="8.9" rx="1.7" ry="1.2" transform="rotate(42 14.6 8.9)" fill="#f23a3a" />
</g></g>
<g transform="translate(842 735.2)"><g>
<path d="M0 3.3H8.8V12.6H0z" fill="#6aaee4" />
<path d="M0 3.3L2.6 0H11.9L8.8 3.3z" fill="#8fcbfb" />
<path d="M8.8 3.3L11.9 0V9.5L8.8 12.6z" fill="#4990cb" />
<path d="M0 13.6H8.8V15.5H0z" fill="#b4b4b4" />
<path d="M8.8 13.6L11.9 10.4V12.3L8.8 15.5z" fill="#cfcfcf" />
<path d="M14.7 1.5V12.6" stroke="#222" stroke-width="1" fill="none" />
<path d="M14.7 .2L16.4 2.7H13z" fill="#222" />
</g></g>
<g transform="translate(866 735.2)"><g>
<path d="M3.3 1.3H12M1.5 3.3V11.6M13.5 3.3V6.5M3.3 13.3H7.6" stroke="#444" stroke-width="1.1" fill="none" />
<rect x="0" y="-.5" width="2.2" height="2.2" fill="#1787f0" /><rect x="13.1" y="-.5" width="2.2" height="2.2" fill="#1787f0" /><rect x="0" y="12.5" width="2.2" height="2.2" fill="#1787f0" />
<path d="M13.3 8.5L15.6 11L11.6 14.7L9.1 12.3z" fill="#f6b83c" />
<path d="M9.1 12.3L11.6 14.7L8.1 15.3z" fill="#5a5a5a" />
<ellipse cx="14.6" cy="8.9" rx="1.7" ry="1.2" transform="rotate(42 14.6 8.9)" fill="#f23a3a" />
</g></g>
<g transform="translate(890 735.2)"><g>
<path d="M0 3.3H8.8V12.6H0z" fill="#6aaee4" />
<path d="M0 3.3L2.6 0H11.9L8.8 3.3z" fill="#8fcbfb" />
<path d="M8.8 3.3L11.9 0V9.5L8.8 12.6z" fill="#4990cb" />
<path d="M0 13.6H8.8V15.5H0z" fill="#b4b4b4" />
<path d="M8.8 13.6L11.9 10.4V12.3L8.8 15.5z" fill="#cfcfcf" />
<path d="M14.7 1.5V12.6" stroke="#222" stroke-width="1" fill="none" />
<path d="M14.7 .2L16.4 2.7H13z" fill="#222" />
</g></g>
<g transform="translate(914 735.2)"><g>
<path d="M3.3 1.3H12M1.5 3.3V11.6M13.5 3.3V6.5M3.3 13.3H7.6" stroke="#444" stroke-width="1.1" fill="none" />
<rect x="0" y="-.5" width="2.2" height="2.2" fill="#1787f0" /><rect x="13.1" y="-.5" width="2.2" height="2.2" fill="#1787f0" /><rect x="0" y="12.5" width="2.2" height="2.2" fill="#1787f0" />
<path d="M13.3 8.5L15.6 11L11.6 14.7L9.1 12.3z" fill="#f6b83c" />
<path d="M9.1 12.3L11.6 14.7L8.1 15.3z" fill="#5a5a5a" />
<ellipse cx="14.6" cy="8.9" rx="1.7" ry="1.2" transform="rotate(42 14.6 8.9)" fill="#f23a3a" />
</g></g>
<g transform="translate(938 735.2)"><g>
<path d="M0 3.3H8.8V12.6H0z" fill="#6aaee4" />
<path d="M0 3.3L2.6 0H11.9L8.8 3.3z" fill="#8fcbfb" />
<path d="M8.8 3.3L11.9 0V9.5L8.8 12.6z" fill="#4990cb" />
<path d="M0 13.6H8.8V15.5H0z" fill="#b4b4b4" />
<path d="M8.8 13.6L11.9 10.4V12.3L8.8 15.5z" fill="#cfcfcf" />
<path d="M14.7 1.5V12.6" stroke="#222" stroke-width="1" fill="none" />
<path d="M14.7 .2L16.4 2.7H13z" fill="#222" />
</g></g>
<g transform="translate(962 735.2)"><g>
<path d="M3.3 1.3H12M1.5 3.3V11.6M13.5 3.3V6.5M3.3 13.3H7.6" stroke="#444" stroke-width="1.1" fill="none" />
<rect x="0" y="-.5" width="2.2" height="2.2" fill="#1787f0" /><rect x="13.1" y="-.5" width="2.2" height="2.2" fill="#1787f0" /><rect x="0" y="12.5" width="2.2" height="2.2" fill="#1787f0" />
<path d="M13.3 8.5L15.6 11L11.6 14.7L9.1 12.3z" fill="#f6b83c" />
<path d="M9.1 12.3L11.6 14.7L8.1 15.3z" fill="#5a5a5a" />
<ellipse cx="14.6" cy="8.9" rx="1.7" ry="1.2" transform="rotate(42 14.6 8.9)" fill="#f23a3a" />
</g></g>
<g transform="translate(986 735.2)"><g>
<path d="M0 3.3H8.8V12.6H0z" fill="#6aaee4" />
<path d="M0 3.3L2.6 0H11.9L8.8 3.3z" fill="#8fcbfb" />
<path d="M8.8 3.3L11.9 0V9.5L8.8 12.6z" fill="#4990cb" />
<path d="M0 13.6H8.8V15.5H0z" fill="#b4b4b4" />
<path d="M8.8 13.6L11.9 10.4V12.3L8.8 15.5z" fill="#cfcfcf" />
<path d="M14.7 1.5V12.6" stroke="#222" stroke-width="1" fill="none" />
<path d="M14.7 .2L16.4 2.7H13z" fill="#222" />
</g></g>
<g transform="translate(1010 735.2)"><g>
<path d="M0 3.3H8.8V12.6H0z" fill="#6aaee4" />
<path d="M0 3.3L2.6 0H11.9L8.8 3.3z" fill="#8fcbfb" />
<path d="M8.8 3.3L11.9 0V9.5L8.8 12.6z" fill="#4990cb" />
<path d="M0 13.6H8.8V15.5H0z" fill="#b4b4b4" />
<path d="M8.8 13.6L11.9 10.4V12.3L8.8 15.5z" fill="#cfcfcf" />
<path d="M14.7 1.5V12.6" stroke="#222" stroke-width="1" fill="none" />
<path d="M14.7 .2L16.4 2.7H13z" fill="#222" />
</g></g>
<g transform="translate(1034 735.2)"><g>
<path d="M3.3 1.3H12M1.5 3.3V11.6M13.5 3.3V6.5M3.3 13.3H7.6" stroke="#444" stroke-width="1.1" fill="none" />
<rect x="0" y="-.5" width="2.2" height="2.2" fill="#1787f0" /><rect x="13.1" y="-.5" width="2.2" height="2.2" fill="#1787f0" /><rect x="0" y="12.5" width="2.2" height="2.2" fill="#1787f0" />
<path d="M13.3 8.5L15.6 11L11.6 14.7L9.1 12.3z" fill="#f6b83c" />
<path d="M9.1 12.3L11.6 14.7L8.1 15.3z" fill="#5a5a5a" />
<ellipse cx="14.6" cy="8.9" rx="1.7" ry="1.2" transform="rotate(42 14.6 8.9)" fill="#f23a3a" />
</g></g>
<g transform="translate(1058 735.2)"><g>
<path d="M0 3.3H8.8V12.6H0z" fill="#6aaee4" />
<path d="M0 3.3L2.6 0H11.9L8.8 3.3z" fill="#8fcbfb" />
<path d="M8.8 3.3L11.9 0V9.5L8.8 12.6z" fill="#4990cb" />
<path d="M0 13.6H8.8V15.5H0z" fill="#b4b4b4" />
<path d="M8.8 13.6L11.9 10.4V12.3L8.8 15.5z" fill="#cfcfcf" />
<path d="M14.7 1.5V12.6" stroke="#222" stroke-width="1" fill="none" />
<path d="M14.7 .2L16.4 2.7H13z" fill="#222" />
</g></g>
<g transform="translate(1082 735.2)"><g>
<path d="M3.3 1.3H12M1.5 3.3V11.6M13.5 3.3V6.5M3.3 13.3H7.6" stroke="#444" stroke-width="1.1" fill="none" />
<rect x="0" y="-.5" width="2.2" height="2.2" fill="#1787f0" /><rect x="13.1" y="-.5" width="2.2" height="2.2" fill="#1787f0" /><rect x="0" y="12.5" width="2.2" height="2.2" fill="#1787f0" />
<path d="M13.3 8.5L15.6 11L11.6 14.7L9.1 12.3z" fill="#f6b83c" />
<path d="M9.1 12.3L11.6 14.7L8.1 15.3z" fill="#5a5a5a" />
<ellipse cx="14.6" cy="8.9" rx="1.7" ry="1.2" transform="rotate(42 14.6 8.9)" fill="#f23a3a" />
</g></g>
<g transform="translate(1106 735.2)"><g>
<path d="M0 3.3H8.8V12.6H0z" fill="#6aaee4" />
<path d="M0 3.3L2.6 0H11.9L8.8 3.3z" fill="#8fcbfb" />
<path d="M8.8 3.3L11.9 0V9.5L8.8 12.6z" fill="#4990cb" />
<path d="M0 13.6H8.8V15.5H0z" fill="#b4b4b4" />
<path d="M8.8 13.6L11.9 10.4V12.3L8.8 15.5z" fill="#cfcfcf" />
<path d="M14.7 1.5V12.6" stroke="#222" stroke-width="1" fill="none" />
<path d="M14.7 .2L16.4 2.7H13z" fill="#222" />
</g></g>
<g transform="translate(1130 735.2)"><g>
<path d="M3.3 1.3H12M1.5 3.3V11.6M13.5 3.3V6.5M3.3 13.3H7.6" stroke="#444" stroke-width="1.1" fill="none" />
<rect x="0" y="-.5" width="2.2" height="2.2" fill="#1787f0" /><rect x="13.1" y="-.5" width="2.2" height="2.2" fill="#1787f0" /><rect x="0" y="12.5" width="2.2" height="2.2" fill="#1787f0" />
<path d="M13.3 8.5L15.6 11L11.6 14.7L9.1 12.3z" fill="#f6b83c" />
<path d="M9.1 12.3L11.6 14.7L8.1 15.3z" fill="#5a5a5a" />
<ellipse cx="14.6" cy="8.9" rx="1.7" ry="1.2" transform="rotate(42 14.6 8.9)" fill="#f23a3a" />
</g></g>
<g transform="translate(1154 735.2)"><g>
<path d="M0 3.3H8.8V12.6H0z" fill="#6aaee4" />
<path d="M0 3.3L2.6 0H11.9L8.8 3.3z" fill="#8fcbfb" />
<path d="M8.8 3.3L11.9 0V9.5L8.8 12.6z" fill="#4990cb" />
<path d="M0 13.6H8.8V15.5H0z" fill="#b4b4b4" />
<path d="M8.8 13.6L11.9 10.4V12.3L8.8 15.5z" fill="#cfcfcf" />
<path d="M14.7 1.5V12.6" stroke="#222" stroke-width="1" fill="none" />
<path d="M14.7 .2L16.4 2.7H13z" fill="#222" />
</g></g>
<g transform="translate(1178 735.2)"><g>
<path d="M3.3 1.3H12M1.5 3.3V11.6M13.5 3.3V6.5M3.3 13.3H7.6" stroke="#444" stroke-width="1.1" fill="none" />
<rect x="0" y="-.5" width="2.2" height="2.2" fill="#1787f0" /><rect x="13.1" y="-.5" width="2.2" height="2.2" fill="#1787f0" /><rect x="0" y="12.5" width="2.2" height="2.2" fill="#1787f0" />
<path d="M13.3 8.5L15.6 11L11.6 14.7L9.1 12.3z" fill="#f6b83c" />
<path d="M9.1 12.3L11.6 14.7L8.1 15.3z" fill="#5a5a5a" />
<ellipse cx="14.6" cy="8.9" rx="1.7" ry="1.2" transform="rotate(42 14.6 8.9)" fill="#f23a3a" />
</g></g>
<g transform="translate(1202 735.2)"><g>
<path d="M0 3.3H8.8V12.6H0z" fill="#6aaee4" />
<path d="M0 3.3L2.6 0H11.9L8.8 3.3z" fill="#8fcbfb" />
<path d="M8.8 3.3L11.9 0V9.5L8.8 12.6z" fill="#4990cb" />
<path d="M0 13.6H8.8V15.5H0z" fill="#b4b4b4" />
<path d="M8.8 13.6L11.9 10.4V12.3L8.8 15.5z" fill="#cfcfcf" />
<path d="M14.7 1.5V12.6" stroke="#222" stroke-width="1" fill="none" />
<path d="M14.7 .2L16.4 2.7H13z" fill="#222" />
</g></g>
<g transform="translate(1226 735.2)"><g>
<path d="M0 3.3H8.8V12.6H0z" fill="#6aaee4" />
<path d="M0 3.3L2.6 0H11.9L8.8 3.3z" fill="#8fcbfb" />
<path d="M8.8 3.3L11.9 0V9.5L8.8 12.6z" fill="#4990cb" />
<path d="M0 13.6H8.8V15.5H0z" fill="#b4b4b4" />
<path d="M8.8 13.6L11.9 10.4V12.3L8.8 15.5z" fill="#cfcfcf" />
<path d="M14.7 1.5V12.6" stroke="#222" stroke-width="1" fill="none" />
<path d="M14.7 .2L16.4 2.7H13z" fill="#222" />
</g></g>
<g transform="translate(1250 735.2)"><g>
<path d="M3.3 1.3H12M1.5 3.3V11.6M13.5 3.3V6.5M3.3 13.3H7.6" stroke="#444" stroke-width="1.1" fill="none" />
<rect x="0" y="-.5" width="2.2" height="2.2" fill="#1787f0" /><rect x="13.1" y="-.5" width="2.2" height="2.2" fill="#1787f0" /><rect x="0" y="12.5" width="2.2" height="2.2" fill="#1787f0" />
<path d="M13.3 8.5L15.6 11L11.6 14.7L9.1 12.3z" fill="#f6b83c" />
<path d="M9.1 12.3L11.6 14.7L8.1 15.3z" fill="#5a5a5a" />
<ellipse cx="14.6" cy="8.9" rx="1.7" ry="1.2" transform="rotate(42 14.6 8.9)" fill="#f23a3a" />
</g></g>
<g transform="translate(1274 735.2)"><g>
<path d="M0 3.3H8.8V12.6H0z" fill="#6aaee4" />
<path d="M0 3.3L2.6 0H11.9L8.8 3.3z" fill="#8fcbfb" />
<path d="M8.8 3.3L11.9 0V9.5L8.8 12.6z" fill="#4990cb" />
<path d="M0 13.6H8.8V15.5H0z" fill="#b4b4b4" />
<path d="M8.8 13.6L11.9 10.4V12.3L8.8 15.5z" fill="#cfcfcf" />
<path d="M14.7 1.5V12.6" stroke="#222" stroke-width="1" fill="none" />
<path d="M14.7 .2L16.4 2.7H13z" fill="#222" />
</g></g>
<g transform="translate(1298 735.2)"><g>
<path d="M3.3 1.3H12M1.5 3.3V11.6M13.5 3.3V6.5M3.3 13.3H7.6" stroke="#444" stroke-width="1.1" fill="none" />
<rect x="0" y="-.5" width="2.2" height="2.2" fill="#1787f0" /><rect x="13.1" y="-.5" width="2.2" height="2.2" fill="#1787f0" /><rect x="0" y="12.5" width="2.2" height="2.2" fill="#1787f0" />
<path d="M13.3 8.5L15.6 11L11.6 14.7L9.1 12.3z" fill="#f6b83c" />
<path d="M9.1 12.3L11.6 14.7L8.1 15.3z" fill="#5a5a5a" />
<ellipse cx="14.6" cy="8.9" rx="1.7" ry="1.2" transform="rotate(42 14.6 8.9)" fill="#f23a3a" />
</g></g>
</g>
<path d="M154 754V760M178 754V760M202 754V760M226 754V760M250 754V760M274 754V760M298 754V760M322 754V760M346 754V760M370 754V760M394 754V760M418 754V760M442 754V760M466 754V760M490 754V760M514 754V760M538 754V760M562 754V760M586 754V760M610 754V760M634 754V760M658 754V760M682 754V760M706 754V760M730 754V760M754 754V760M778 754V760M802 754V760M826 754V760M850 754V760M874 754V760M898 754V760M922 754V760M946 754V760M970 754V760M994 754V760M1018 754V760M1042 754V760M1066 754V760M1090 754V760M1114 754V760M1138 754V760M1162 754V760M1186 754V760M1210 754V760M1234 754V760M1258 754V760M1282 754V760M1306 754V760" stroke="#c8c8c8" stroke-width="2" fill="none" />
<path d="M153 760H1307" stroke="#c8c8c8" stroke-width="2" fill="none" />
<path d="M1315.4 760h7" stroke="#c8c8c8" stroke-width="2" stroke-dasharray="3 1.5" fill="none" />
<path d="M218.3 730.6L222.6 726.5M223.4 730.6L227.7 726.5M228.4 730.6L232.7 726.5" stroke="#444" stroke-width="1.6" fill="none" />
<g fill="#4a4a4a">
<path d="M11 741.5h1.8v13.3H11zM22.8 741.5V754.8L13.2 748.2z" />
<path d="M35.7 748L44.5 741.8V754.2zM45.8 744.5h1.8v7h-1.8z" />
<path d="M60.7 740.2L72.7 748.2L60.7 756.2z" />
<path d="M97.5 748L88.7 741.8V754.2zM85.6 744.5h1.8v7h-1.8z" />
<path d="M121.2 741.5h1.8v13.3h-1.8zM111.2 741.5V754.8L120.8 748.2z" />
</g>
<g transform="translate(1345.2 748.2)" fill="#838383">
<circle r="5.9" />
<g id="teeth2"><rect x="-1.7" y="-8.2" width="3.4" height="16.4" /><rect x="-8.2" y="-1.7" width="16.4" height="3.4" /></g>
<g transform="rotate(45)"><g><rect x="-1.7" y="-8.2" width="3.4" height="16.4" /><rect x="-8.2" y="-1.7" width="16.4" height="3.4" /></g></g>
<circle r="2.7" fill="#f2f2f2" />
</g>
</svg>
<div class="t" style="left:23.4px;top:6px;font-size:12px;color:#000;transform:scaleX(0.9634);">Autodesk Fusion 360 (Education License)</div>
<div class="t" style="left:619.3px;top:35px;font-size:13px;color:#3a3a3a;transform:scaleX(0.9090);">CHARGING DOC v2*</div>
<div class="t" style="left:42.2px;top:91px;font-size:11px;color:#333;font-weight:bold;transform:scaleX(0.8889);">DESIGN</div>
<div class="t" style="left:151.4px;top:61px;font-size:11px;color:#0696d7;transform:scaleX(0.9359);">SOLID</div>
<div class="t" style="left:228.3px;top:61px;font-size:11px;color:#3a3a3a;transform:scaleX(0.8909);">SURFACE</div>
<div class="t" style="left:321.4px;top:61px;font-size:11px;color:#3a3a3a;transform:scaleX(0.8967);">SHEET METAL</div>
<div class="t" style="left:434.2px;top:61px;font-size:11px;color:#3a3a3a;transform:scaleX(0.9355);">TOOLS</div>
<div class="t" style="left:257.6px;top:122px;font-size:11px;color:#3a3a3a;transform:scaleX(0.8650);">CREATE</div>
<div class="t" style="left:546.4px;top:122px;font-size:11px;color:#3a3a3a;transform:scaleX(0.8882);">MODIFY</div>
<div class="t" style="left:722.4px;top:122px;font-size:11px;color:#3a3a3a;transform:scaleX(0.9189);">ASSEMBLE</div>
<div class="t" style="left:817.7px;top:122px;font-size:11px;color:#3a3a3a;transform:scaleX(0.8833);">CONSTRUCT</div>
<div class="t" style="left:916.4px;top:122px;font-size:11px;color:#3a3a3a;transform:scaleX(0.8493);">INSPECT</div>
<div class="t" style="left:995.3px;top:122px;font-size:11px;color:#3a3a3a;transform:scaleX(0.8570);">INSERT</div>
<div class="t" style="left:1064.6px;top:122px;font-size:11px;color:#3a3a3a;transform:scaleX(0.8669);">SELECT</div>
<div class="t" style="left:29.2px;top:148px;font-size:11px;color:#444;transform:scaleX(0.9148);">BROWSER</div>
<div class="t" style="left:29.2px;top:696px;font-size:11px;color:#444;transform:scaleX(0.8851);">COMMENTS</div>
<div class="t" style="left:103.4px;top:176px;font-size:11px;color:#fff;font-weight:bold;transform:scaleX(0.9407);">CHARGING DOC v2</div>
<div class="t" style="left:91.1px;top:200px;font-size:11px;color:#222;transform:scaleX(0.9619);">Document Settings</div>
<div class="t" style="left:91.1px;top:224px;font-size:11px;color:#222;transform:scaleX(0.9930);">Named Views</div>
<div class="t" style="left:116.4px;top:248px;font-size:11px;color:#222;transform:scaleX(0.9235);">Origin</div>
<div class="t" style="left:116.4px;top:272px;font-size:11px;color:#222;transform:scaleX(0.9512);">Bodies</div>
<div class="t" style="left:134.4px;top:296px;font-size:11px;color:#222;transform:scaleX(0.9486);">Body1</div>
<div class="t" style="left:116.4px;top:320px;font-size:11px;color:#222;transform:scaleX(0.9724);">Sketches</div>
<div class="t" style="left:1195.1px;top:697px;font-size:11px;color:#222;font-weight:bold;transform:scaleX(1.0132);">1 Face | Area : 476.919 mm^2</div>
</body>
</html>
